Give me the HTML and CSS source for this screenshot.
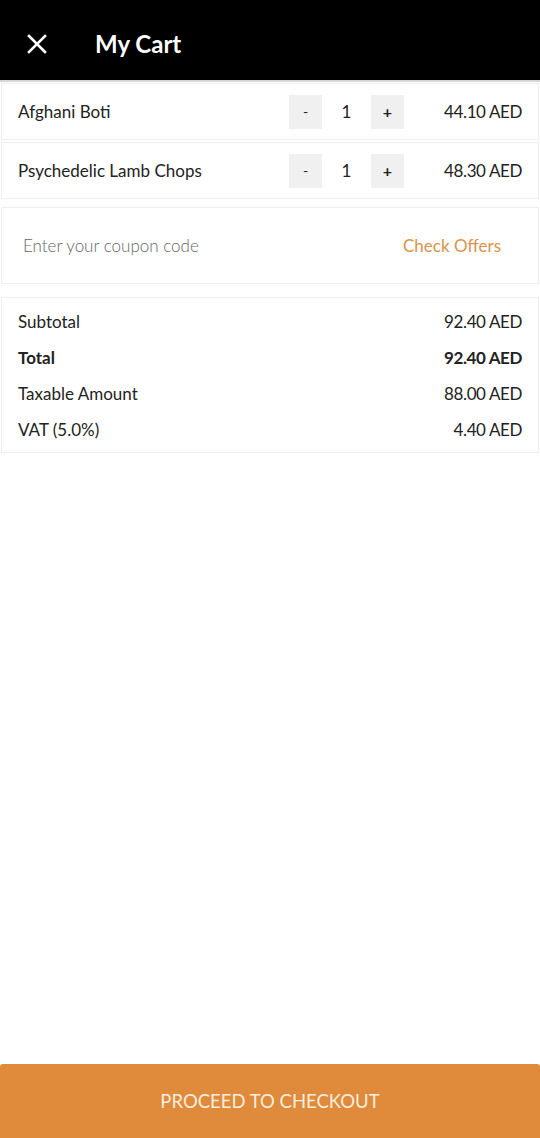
FILE: index.html
```html
<!DOCTYPE html>
<html>
<head>
<meta charset="utf-8">
<link rel="stylesheet" href="styles.css">
</head>
<body>
<div class="app">
  <header class="topbar">
    <svg class="close" width="20" height="20" viewBox="0 0 20 20"><path d="M2 2 L18 18 M18 2 L2 18" stroke="#fff" stroke-width="2.6" stroke-linecap="square" fill="none"/></svg>
    <h1 class="title">My Cart</h1>
  </header>
  <main class="content">
    <div class="item">
      <span class="item-name">Afghani Boti</span>
      <div class="qty">
        <button class="qbtn minus">-</button>
        <span class="qnum">1</span>
        <button class="qbtn plus">+</button>
      </div>
      <span class="item-price">44.10 AED</span>
    </div>
    <div class="item">
      <span class="item-name">Psychedelic Lamb Chops</span>
      <div class="qty">
        <button class="qbtn minus">-</button>
        <span class="qnum">1</span>
        <button class="qbtn plus">+</button>
      </div>
      <span class="item-price">48.30 AED</span>
    </div>
    <div class="coupon">
      <span class="coupon-input">Enter your coupon code</span>
      <span class="offers">Check Offers</span>
    </div>
    <div class="summary">
      <div class="srow"><span>Subtotal</span><span>92.40 AED</span></div>
      <div class="srow bold"><span>Total</span><span>92.40 AED</span></div>
      <div class="srow"><span>Taxable Amount</span><span>88.00 AED</span></div>
      <div class="srow"><span>VAT (5.0%)</span><span>4.40 AED</span></div>
    </div>
  </main>
  <footer class="checkout">PROCEED TO CHECKOUT</footer>
</div>
</body>
</html>
```
FILE: styles.css
```css
* { box-sizing: border-box; }
html, body { margin: 0; padding: 0; }
body {
  font-family: "Lato", "Noto Sans", sans-serif;
  color: #222;
  background: #fff;
}
.app {
  width: 540px;
  height: 1138px;
  display: flex;
  flex-direction: column;
}
.topbar {
  height: 82px;
  background: #000;
  border-bottom: 2px solid #d6d6d6;
  display: flex;
  align-items: center;
  padding-left: 27px;
  flex-shrink: 0;
}
.close { display: block; margin-top: 8px; }
.title {
  margin: 0 0 0 48px;
  color: #fff;
  font-size: 24px;
  font-weight: 700;
  padding-top: 7px;
}
.content {
  flex: 1;
  display: flex;
  flex-direction: column;
  padding: 1px 1px 0;
}
.item {
  height: 57px;
  border: 1px solid #eeeeee;
  display: flex;
  align-items: center;
  padding: 0 16px 0 16px;
  margin-bottom: 2px;
  font-size: 17px;
}
.item-name { flex: 1; }
.qty {
  display: flex;
  align-items: center;
  width: 115px;
  justify-content: space-between;
}
.qbtn {
  width: 33px;
  height: 34px;
  border: none;
  background: #f0f0f0;
  font-family: inherit;
  font-size: 14px;
  color: #222;
  padding: 0;
}
.qbtn.plus { font-size: 16px; font-weight: 700; }
.qnum { font-size: 17px; }
.item-price { width: 118px; text-align: right; letter-spacing: -0.4px; }
.coupon {
  margin-top: 6px;
  height: 77px;
  border: 1px solid #eeeeee;
  display: flex;
  align-items: center;
  justify-content: space-between;
  padding: 0 37px 0 21px;
  font-size: 17px;
}
.coupon-input { color: #666; font-weight: 300; }
.offers { color: #d9934d; }
.summary {
  margin-top: 13px;
  border: 1px solid #eeeeee;
  padding: 5px 16px 5px 16px;
  font-size: 17px;
}
.srow {
  height: 36px;
  display: flex;
  align-items: center;
  justify-content: space-between;
}
.srow span:last-child { letter-spacing: -0.4px; }
.srow.bold { font-weight: 700; }
.checkout {
  height: 74px;
  flex-shrink: 0;
  background: #e08a3c;
  color: #fbeede;
  display: flex;
  align-items: center;
  justify-content: center;
  font-size: 18.5px;
  border-radius: 3px 3px 0 0;
}
```
